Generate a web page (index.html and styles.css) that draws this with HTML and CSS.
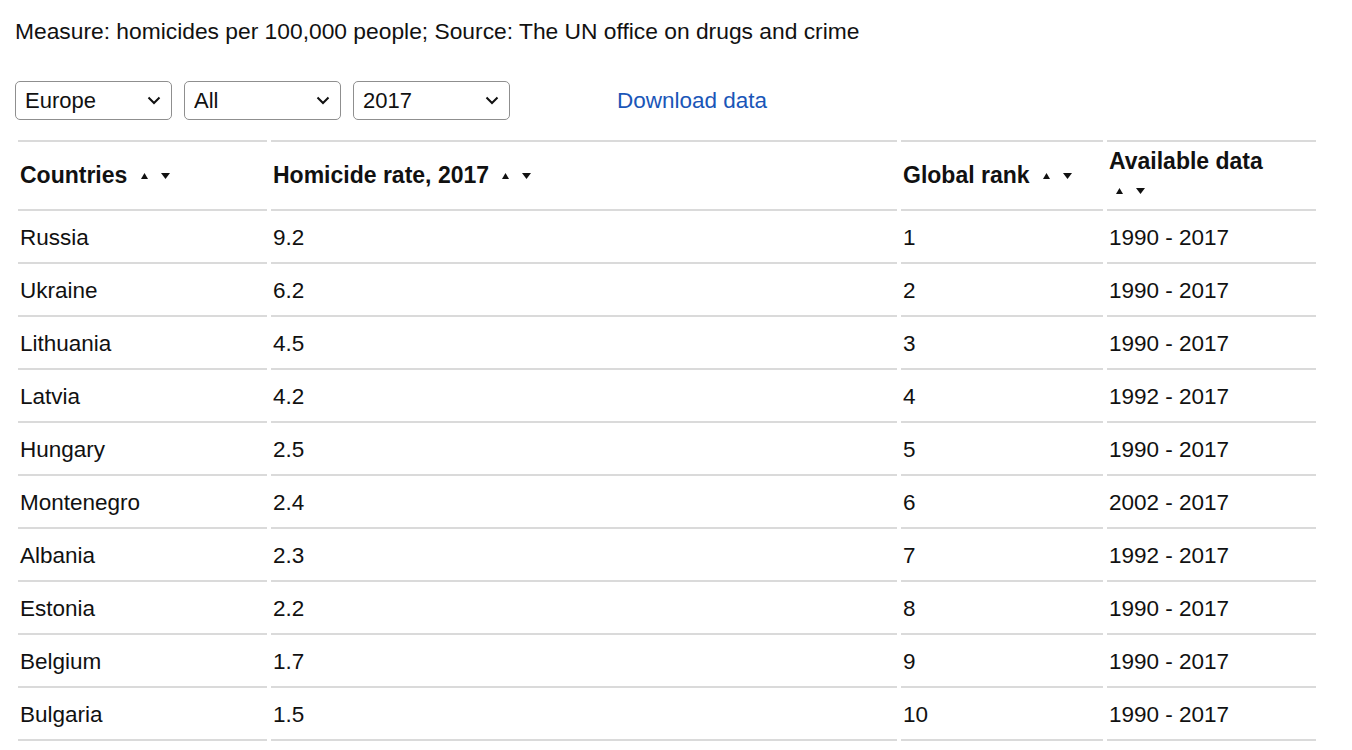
FILE: index.html
```html
<!DOCTYPE html>
<html lang="en">
<head>
<meta charset="utf-8">
<title>Homicide rates</title>
<link rel="stylesheet" href="styles.css">
</head>
<body>
<div class="page">
  <p class="measure">Measure: homicides per 100,000 people; Source: The UN office on drugs and crime</p>
  <div class="controls">
    <span class="select-wrap">
      <select class="select"><option>Europe</option></select>
      <svg class="chev" width="14" height="9" viewBox="0 0 14 9"><path d="M1.5 1.5 L7 7 L12.5 1.5" fill="none" stroke="#111" stroke-width="2"/></svg>
    </span>
    <span class="select-wrap">
      <select class="select"><option>All</option></select>
      <svg class="chev" width="14" height="9" viewBox="0 0 14 9"><path d="M1.5 1.5 L7 7 L12.5 1.5" fill="none" stroke="#111" stroke-width="2"/></svg>
    </span>
    <span class="select-wrap">
      <select class="select"><option>2017</option></select>
      <svg class="chev" width="14" height="9" viewBox="0 0 14 9"><path d="M1.5 1.5 L7 7 L12.5 1.5" fill="none" stroke="#111" stroke-width="2"/></svg>
    </span>
    <a class="download" href="#">Download data</a>
  </div>
  <table class="data">
    <colgroup>
      <col class="c1"><col class="c2"><col class="c3"><col class="c4">
    </colgroup>
    <thead>
      <tr>
        <th>Countries <svg class="sort" width="29" height="8" viewBox="0 0 29 8"><path d="M0 7 L3.5 1 L7 7 Z" fill="#111"/><path d="M20 1 L29 1 L24.5 7 Z" fill="#111"/></svg></th>
        <th>Homicide rate, 2017 <svg class="sort" width="29" height="8" viewBox="0 0 29 8"><path d="M0 7 L3.5 1 L7 7 Z" fill="#111"/><path d="M20 1 L29 1 L24.5 7 Z" fill="#111"/></svg></th>
        <th>Global rank <svg class="sort" width="29" height="8" viewBox="0 0 29 8"><path d="M0 7 L3.5 1 L7 7 Z" fill="#111"/><path d="M20 1 L29 1 L24.5 7 Z" fill="#111"/></svg></th>
        <th>Available data <svg class="sort" width="29" height="8" viewBox="0 0 29 8"><path d="M0 7 L3.5 1 L7 7 Z" fill="#111"/><path d="M20 1 L29 1 L24.5 7 Z" fill="#111"/></svg></th>
      </tr>
    </thead>
    <tbody>
      <tr><td>Russia</td><td>9.2</td><td>1</td><td>1990 - 2017</td></tr>
      <tr><td>Ukraine</td><td>6.2</td><td>2</td><td>1990 - 2017</td></tr>
      <tr><td>Lithuania</td><td>4.5</td><td>3</td><td>1990 - 2017</td></tr>
      <tr><td>Latvia</td><td>4.2</td><td>4</td><td>1992 - 2017</td></tr>
      <tr><td>Hungary</td><td>2.5</td><td>5</td><td>1990 - 2017</td></tr>
      <tr><td>Montenegro</td><td>2.4</td><td>6</td><td>2002 - 2017</td></tr>
      <tr><td>Albania</td><td>2.3</td><td>7</td><td>1992 - 2017</td></tr>
      <tr><td>Estonia</td><td>2.2</td><td>8</td><td>1990 - 2017</td></tr>
      <tr><td>Belgium</td><td>1.7</td><td>9</td><td>1990 - 2017</td></tr>
      <tr><td>Bulgaria</td><td>1.5</td><td>10</td><td>1990 - 2017</td></tr>
    </tbody>
  </table>
</div>
</body>
</html>
```
FILE: styles.css
```css
html, body {
  margin: 0;
  background: #fff;
}
body {
  font-family: "Liberation Sans", Arial, sans-serif;
  font-size: 22.5px;
  color: #111;
}
.page {
  padding: 16px 15px 0 15px;
}
.measure {
  margin: 0;
  line-height: 30px;
  font-size: 22.8px;
}
.controls {
  display: flex;
  align-items: center;
  margin-top: 35px;
  height: 39px;
}
.select-wrap {
  position: relative;
  display: inline-block;
  margin-right: 12px;
}
.select {
  appearance: none;
  -webkit-appearance: none;
  width: 157px;
  height: 39px;
  box-sizing: border-box;
  border: 1px solid #8f8f8f;
  border-radius: 5px;
  background: #fff;
  font-family: "Liberation Sans", Arial, sans-serif;
  font-size: 22px;
  color: #111;
  padding: 0 0 0 9px;
  margin: 0;
  display: block;
}
.chev {
  position: absolute;
  right: 11px;
  top: 15px;
  pointer-events: none;
}
.download {
  margin-left: 95px;
  color: #1a56b8;
  text-decoration: none;
}
.data {
  margin-top: 20px;
  margin-left: -1px;
  border-collapse: separate;
  border-spacing: 4px 0;
  table-layout: fixed;
  width: 1306px;
}
.c1 { width: 249px; }
.c2 { width: 626px; }
.c3 { width: 202px; }
.c4 { width: 209px; }
.data th,
.data td {
  text-align: left;
  padding: 0 2px;
  border-bottom: 2px solid #dadada;
  vertical-align: middle;
}
.data th {
  font-size: 23px;
  font-weight: bold;
  border-top: 2px solid #dadada;
  height: 71px;
  line-height: 29px;
  padding-right: 16px;
  box-sizing: border-box;
}
.data td {
  height: 53px;
  padding-top: 3px;
  box-sizing: border-box;
}
.sort {
  margin-left: 7px;
  vertical-align: 3px;
}
```
